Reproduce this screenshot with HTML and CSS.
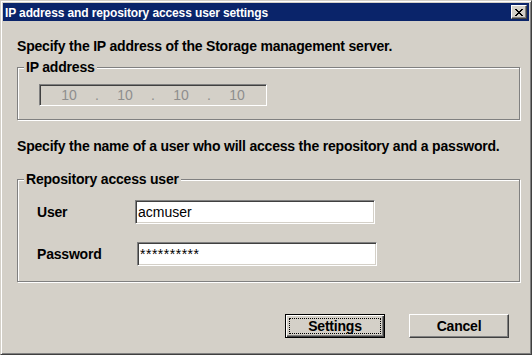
FILE: index.html
```html
<!DOCTYPE html>
<html lang="en">
<head>
    <meta charset="UTF-8">
    <title>IP address and repository access user settings</title>
    <link rel="stylesheet" href="styles.css">
</head>
<body>
    <div class="window">
        <div class="titlebar">
            <span class="title">IP address and repository access user settings</span>
            <span class="close">
                <svg width="8" height="7" viewBox="0 0 8 7" shape-rendering="crispEdges">
                    <path fill="#000" d="M0 0h2v1H0zM6 0h2v1H6zM1 1h2v1H1zM5 1h2v1H5zM2 2h4v1H2zM3 3h2v1H3zM2 4h4v1H2zM1 5h2v1H1zM5 5h2v1H5zM0 6h2v1H0zM6 6h2v1H6z"/>
                </svg>
            </span>
        </div>
        <div class="content">
            <p class="intro">Specify the IP address of the Storage management server.</p>
            <fieldset class="group group-ip">
                <legend>IP address</legend>
                <div class="ipfield">
                    <span>10</span><span>.</span><span>10</span><span>.</span><span>10</span><span>.</span><span>10</span>
                </div>
            </fieldset>
            <p class="intro">Specify the name of a user who will access the repository and a password.</p>
            <fieldset class="group group-user">
                <legend>Repository access user</legend>
                <div class="row">
                    <span class="label">User</span>
                    <div class="field">acmuser</div>
                </div>
                <div class="row row-pass">
                    <span class="label">Password</span>
                    <div class="field">**********</div>
                </div>
            </fieldset>
            <div class="buttons">
                <button class="btn btn-default"><span class="focus">Settings</span></button>
                <button class="btn">Cancel</button>
            </div>
        </div>
    </div>
</body>
</html>
```

FILE: styles.css
```css
body {
    margin: 0;
    font-family: "Liberation Sans", Arial, sans-serif;
}
.window {
    width: 532px;
    height: 355px;
    box-sizing: border-box;
    padding: 2px;
    background: #d4d0c8;
    border: 1px solid;
    border-color: #d4d0c8 #404040 #404040 #d4d0c8;
    box-shadow: inset 1px 1px 0 #fff, inset -1px -1px 0 #808080;
}
.titlebar {
    height: 18px;
    display: flex;
    align-items: center;
    justify-content: space-between;
    padding: 0 2px;
    background: #0a246a;
    color: #fff;
}
.title {
    font-weight: bold;
    font-size: 12px;
    line-height: 14px;
    letter-spacing: -0.12px;
    padding-top: 1px;
}
.close {
    width: 16px;
    height: 14px;
    box-sizing: border-box;
    display: flex;
    align-items: center;
    justify-content: center;
    background: #d4d0c8;
    border: 1px solid;
    border-color: #fff #404040 #404040 #fff;
    box-shadow: inset -1px -1px 0 #808080;
}
.close svg {
    display: block;
}
.content {
    font-weight: bold;
    font-size: 14px;
    line-height: 16px;
    letter-spacing: -0.2px;
    color: #000;
}
.intro {
    margin: 18px 0 0 14px;
}
.intro:first-child {
    margin-top: 17px;
}
.group {
    width: 503px;
    box-sizing: border-box;
    margin: 6px 0 0 14px;
    padding: 9px 6px 13px 6px;
    border: 1px solid #808080;
    box-shadow: 1px 1px 0 #fff, inset 1px 1px 0 #fff;
    min-inline-size: 0;
}
.group legend {
    padding: 0 2px;
    line-height: 15px;
    background: #d4d0c8;
}
.group-user {
    margin-top: 18px;
    padding: 13px 6px 15px 6px;
}
.ipfield {
    margin-left: 15px;
    width: 228px;
    height: 22px;
    box-sizing: border-box;
    padding-left: 15px;
    display: flex;
    align-items: center;
    font-weight: normal;
    letter-spacing: 0;
    color: #8e8e8e;
    border: 1px solid;
    border-color: #808080 #fff #fff #808080;
    box-shadow: inset 1px 1px 0 #404040, inset -1px -1px 0 #d4d0c8;
}
.ipfield span {
    width: 28px;
    text-align: center;
}
.row {
    display: flex;
    align-items: center;
    margin-left: 13px;
}
.row + .row {
    margin-top: 18px;
}
.label {
    width: 98px;
}
.row-pass .field {
    margin-left: 2px;
    letter-spacing: 0.5px;
}
.field {
    width: 240px;
    height: 24px;
    box-sizing: border-box;
    padding-left: 2px;
    display: flex;
    align-items: center;
    background: #fff;
    font-weight: normal;
    letter-spacing: 0;
    border: 1px solid;
    border-color: #808080 #fff #fff #808080;
    box-shadow: inset 1px 1px 0 #404040, inset -1px -1px 0 #d4d0c8;
}
.buttons {
    display: flex;
    gap: 24px;
    margin-top: 32px;
    padding-left: 282px;
}
.btn {
    width: 100px;
    height: 24px;
    box-sizing: border-box;
    padding: 0;
    margin: 0;
    display: flex;
    align-items: center;
    justify-content: center;
    font: inherit;
    letter-spacing: inherit;
    color: #000;
    background: #d4d0c8;
    border: 1px solid;
    border-color: #fff #404040 #404040 #fff;
    box-shadow: inset -1px -1px 0 #808080;
}
.btn-default {
    padding: 3px;
    border-color: #000;
    box-shadow: inset 1px 1px 0 #fff, inset -1px -1px 0 #404040, inset -2px -2px 0 #808080;
}
.btn-default .focus {
    flex: 1;
    align-self: stretch;
    display: flex;
    align-items: center;
    justify-content: center;
    border: 1px dotted #000;
}
```
